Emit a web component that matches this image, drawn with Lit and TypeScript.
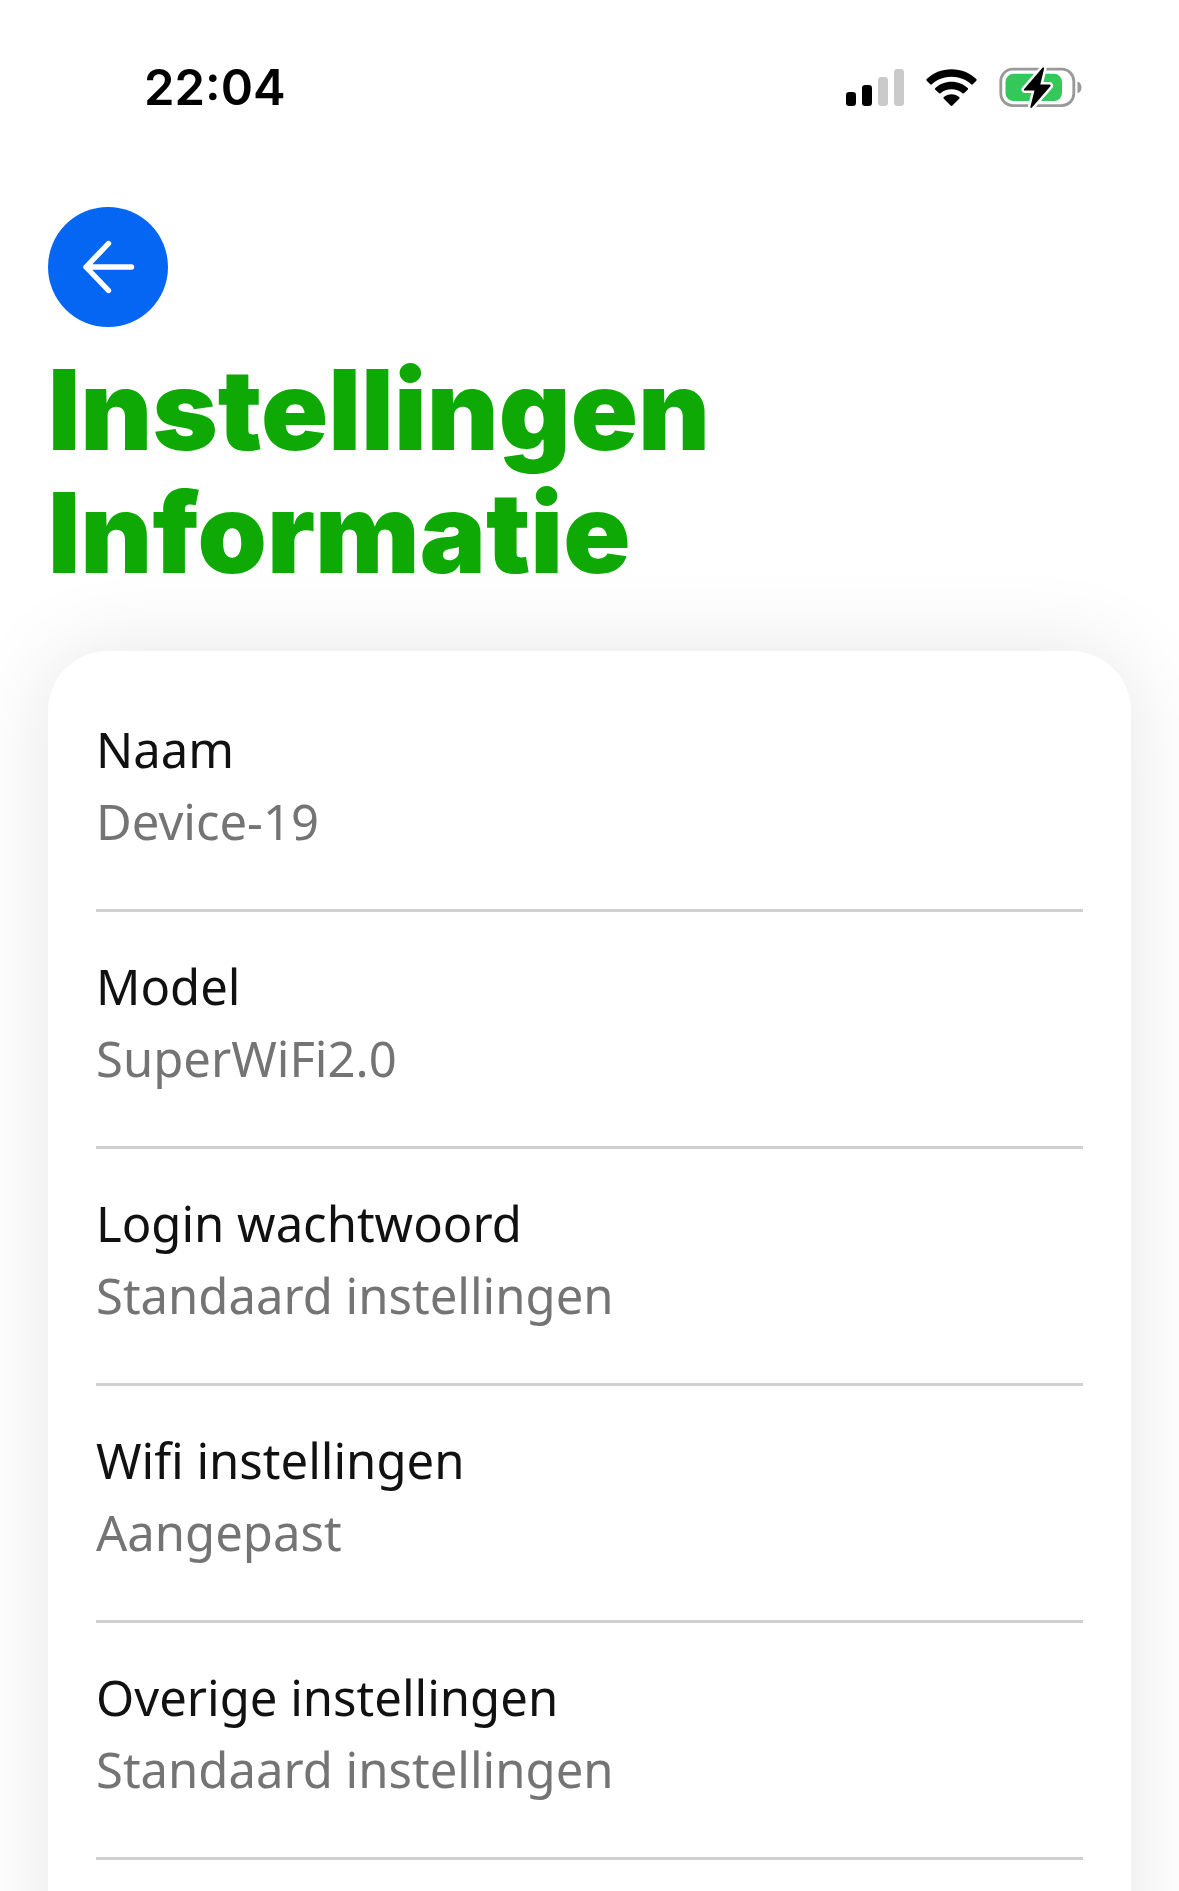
import { LitElement, html, css, svg } from "lit";
import { customElement, property } from "lit/decorators.js";

interface Setting {
  label: string;
  value: string;
}

const SETTINGS: Setting[] = [
  { label: "Naam", value: "Device-19" },
  { label: "Model", value: "SuperWiFi2.0" },
  { label: "Login wachtwoord", value: "Standaard instellingen" },
  { label: "Wifi instellingen", value: "Aangepast" },
  { label: "Overige instellingen", value: "Standaard instellingen" },
];

const SIGNAL_BARS = [
  { x: 0, height: 14, on: true },
  { x: 16, height: 21, on: true },
  { x: 32, height: 29, on: false },
  { x: 48, height: 37, on: false },
];

@customElement("status-bar")
class StatusBar extends LitElement {
  @property() time = "";

  static styles = css`
    :host {
      display: flex;
      align-items: center;
      justify-content: space-between;
      height: 176px;
      padding: 0 96px 0 144px;
      box-sizing: border-box;
      color: #000;
    }
    .time {
      font: 600 49px/60px Inter, "Liberation Sans", sans-serif;
    }
    .icons {
      display: flex;
      align-items: center;
      gap: 22px;
    }
    svg {
      display: block;
    }
    .on {
      fill: #000;
    }
    .off {
      fill: #cacaca;
    }
  `;

  render() {
    return html`
      <span class="time">${this.time}</span>
      <div class="icons">
        <svg width="58" height="38" viewBox="0 0 58 38" role="img" aria-label="Signaal">
          ${SIGNAL_BARS.map(
            (b) => svg`<rect class=${b.on ? "on" : "off"} x=${b.x} y=${37 - b.height} width="10" height=${b.height} rx="3.2" />`
          )}
        </svg>
        <svg width="51" height="38" viewBox="0 0 51 38" role="img" aria-label="Wifi">
          <path d="M25.5 0.2C35.2 0.2 44 3.9 50.3 10.1C50.8 10.6 50.8 11.3 50.3 11.8L46.8 15.3C46.3 15.8 45.6 15.8 45.1 15.3C40 10.6 33.1 7.8 25.5 7.8S11 10.6 5.9 15.3C5.4 15.8 4.700 15.8 4.2 15.3L0.7 11.8C0.2 11.3 0.2 10.6 0.7 10.1C7 3.9 15.8 0.2 25.5 0.2Z" />
          <path d="M25.5 12.7C31.8 12.7 37.5 15.100 41.7 19C42.2 19.5 42.2 20.2 41.7 20.7L38.2 24.100C37.7 24.600 37 24.600 36.5 24.2C33.6 21.600 29.7 20.2 25.5 20.2S17.4 21.600 14.5 24.2C14 24.600 13.3 24.600 12.8 24.100L9.3 20.7C8.8 20.2 8.8 19.5 9.3 19C13.500 15.100 19.2 12.7 25.5 12.7Z" />
          <path d="M25.5 25.2C28.5 25.2 31.2 26.3 33.2 28.100C33.7 28.600 33.7 29.3 33.2 29.8L26.4 36.500C25.9 37 25.1 37 24.6 36.500L17.8 29.8C17.3 29.3 17.3 28.600 17.8 28.100C19.8 26.3 22.5 25.2 25.5 25.2Z" />
        </svg>
        <svg width="84" height="42" viewBox="0 0 84 42" role="img" aria-label="Batterij laadt op">
          <rect x="1.8" y="2.2" width="73" height="36.400" rx="12" fill="#fff" stroke="#999" stroke-width="2.8" />
          <path d="M78.500 14.500C81 15.300 82.500 17.600 82.500 20.400S81 25.500 78.500 26.300Z" fill="#999" />
          <rect x="6.5" y="6.8" width="56.500" height="27.200" rx="8" fill="#34c759" />
          <path
            d="M43.500 0.800L25.200 21.900C24.600 22.700 25 23.600 26 23.600H35.500L31.400 39.800C31.100 40.900 32.200 41.400 33 40.600L51.400 19.300C52 18.500 51.600 17.600 50.600 17.600H41.300L45.100 1.600C45.300 0.500 44.300 0 43.500 0.800Z"
            fill="#000"
            stroke="#fff"
            stroke-width="5"
            stroke-linejoin="round"
            paint-order="stroke"
          />
        </svg>
      </div>
    `;
  }
}

@customElement("settings-list")
class SettingsList extends LitElement {
  @property({ attribute: false }) items: Setting[] = [];

  static styles = css`
    :host {
      display: block;
      padding: 24px 48px 0;
      border-radius: 60px 60px 0 0;
      background: #fff;
      box-shadow: 0 0 88px rgba(0, 0, 0, 0.1);
    }
    dl {
      margin: 0;
      font: 380 49px/72px "Noto Sans", "Open Sans", sans-serif;
    }
    .row {
      padding: 38px 0 52px;
      border-bottom: 3px solid #d0d0d0;
    }
    dt {
      color: #111;
    }
    dd {
      margin: 0;
      color: #747474;
    }
  `;

  render() {
    return html`
      <dl>
        ${this.items.map(
          (item) => html`
            <div class="row">
              <dt>${item.label}</dt>
              <dd>${item.value}</dd>
            </div>
          `
        )}
      </dl>
    `;
  }
}

@customElement("app-root")
class AppRoot extends LitElement {
  static styles = css`
    :host {
      display: flex;
      flex-direction: column;
      min-height: 100vh;
      overflow: hidden;
      background: #fff;
    }
    header {
      padding: 31px 48px 57px;
    }
    .back {
      display: grid;
      place-items: center;
      width: 120px;
      height: 120px;
      padding: 0;
      border: 0;
      border-radius: 50%;
      background: #0566f4;
      cursor: pointer;
    }
    h1 {
      margin: 21px 0 0;
      color: #0ea904;
      font: 900 111px/123px Inter, "Open Sans", sans-serif;
    }
    .line {
      display: block;
    }
    /* The list runs on past the lower edge of the screen. */
    settings-list {
      flex: 1;
      margin: 0 48px -120px;
    }
  `;

  render() {
    return html`
      <status-bar time="22:04"></status-bar>
      <header>
        <button class="back" type="button" aria-label="Terug">
          <svg width="56" height="56" viewBox="0 0 56 56" fill="none" stroke="#fff" stroke-width="5.4" stroke-linecap="round" stroke-linejoin="round">
            <path d="M28.5 4.5L6 28L28.5 51.5M6 28H51.5" />
          </svg>
        </button>
        <h1><span class="line">Instellingen</span> <span class="line">Informatie</span></h1>
      </header>
      <settings-list .items=${SETTINGS}></settings-list>
    `;
  }
}
